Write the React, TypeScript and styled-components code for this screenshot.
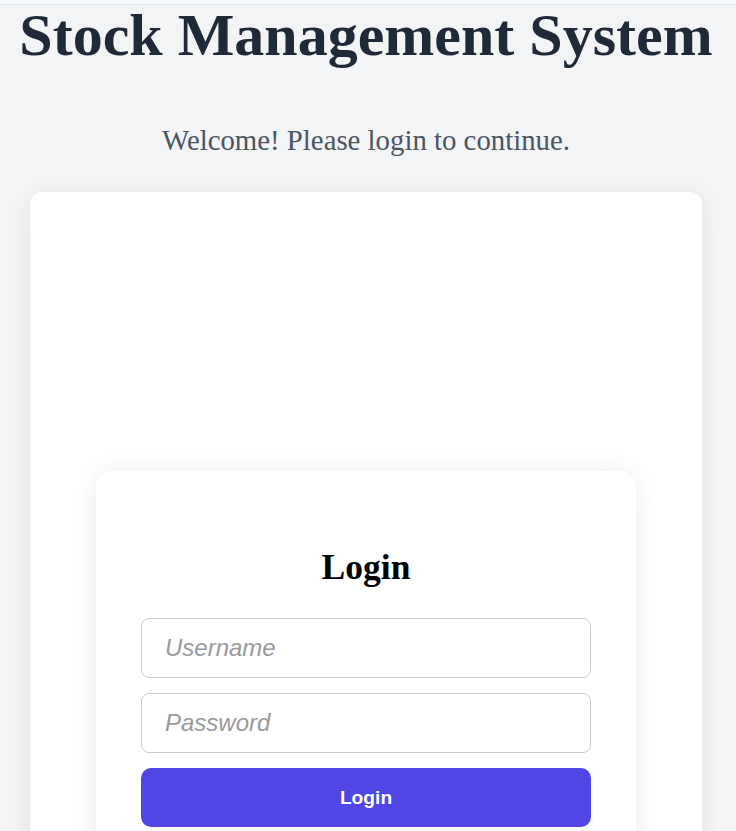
import React from "react";
import styled, { createGlobalStyle } from "styled-components";

const GlobalStyle = createGlobalStyle`
  html, body {
    margin: 0;
    padding: 0;
    background: #f3f4f6;
  }
  body {
    font-family: "Liberation Serif", "Times New Roman", serif;
  }
  * { box-sizing: border-box; }
`;

const Page = styled.div`
  min-height: 831px;
  padding-right: 4px;
  display: flex;
  flex-direction: column;
  align-items: center;
  background: #f3f4f6;
`;

const TopBar = styled.div`
  align-self: stretch;
  margin-right: -4px;
  height: 5px;
  background: #f8f9fb;
  border-bottom: 1px solid #e3e6ee;
`;

const Title = styled.h1`
  margin: 0;
  font-family: "Liberation Serif", "Times New Roman", serif;
  font-size: 60px;
  font-weight: 700;
  color: #1f2937;
  line-height: 60px;
  white-space: nowrap;
  text-align: center;
`;

const Subtitle = styled.p`
  margin: 59px 0 0;
  font-family: "Liberation Serif", "Times New Roman", serif;
  font-size: 28.8px;
  color: #4b5563;
  line-height: 33px;
  text-align: center;
`;

const OuterCard = styled.div`
  align-self: stretch;
  margin: 35px 30px 0;
  padding-top: 279px;
  background: #ffffff;
  border-radius: 12px;
  box-shadow: 0 4px 24px rgba(0, 0, 0, 0.07);
  display: flex;
  justify-content: center;
`;

const LoginCard = styled.form`
  width: 540px;
  padding: 76px 45px 40px;
  background: #ffffff;
  border-radius: 16px;
  box-shadow: 0 0 28px rgba(0, 0, 0, 0.08);
  display: flex;
  flex-direction: column;
  gap: 15px;
`;

const LoginHeading = styled.h2`
  margin: 0 0 15px;
  font-family: "Liberation Serif", "Times New Roman", serif;
  font-size: 35.5px;
  font-weight: 700;
  color: #000000;
  text-align: center;
  line-height: 41px;
`;

const Field = styled.input`
  width: 100%;
  height: 60px;
  padding: 0 23px;
  border: 1px solid #cccccc;
  border-radius: 8px;
  background: #ffffff;
  font-family: "Liberation Sans", Arial, sans-serif;
  font-size: 24px;
  font-style: italic;
  color: #333;
  outline: none;
  &::placeholder {
    color: #9a9a9a;
    font-style: italic;
  }
`;

const SubmitButton = styled.button`
  width: 100%;
  height: 59px;
  border: none;
  border-radius: 10px;
  background: #4f46e5;
  color: #ffffff;
  font-family: "Liberation Sans", Arial, sans-serif;
  font-size: 19.2px;
  font-weight: 700;
  cursor: pointer;
`;

export default function App() {
  return (
    <>
      <GlobalStyle />
      <Page>
        <TopBar />
        <Title>Stock Management System</Title>
        <Subtitle>Welcome! Please login to continue.</Subtitle>
        <OuterCard>
          <LoginCard onSubmit={(e) => e.preventDefault()}>
            <LoginHeading>Login</LoginHeading>
            <Field type="text" placeholder="Username" />
            <Field type="password" placeholder="Password" />
            <SubmitButton type="submit">Login</SubmitButton>
          </LoginCard>
        </OuterCard>
      </Page>
    </>
  );
}
